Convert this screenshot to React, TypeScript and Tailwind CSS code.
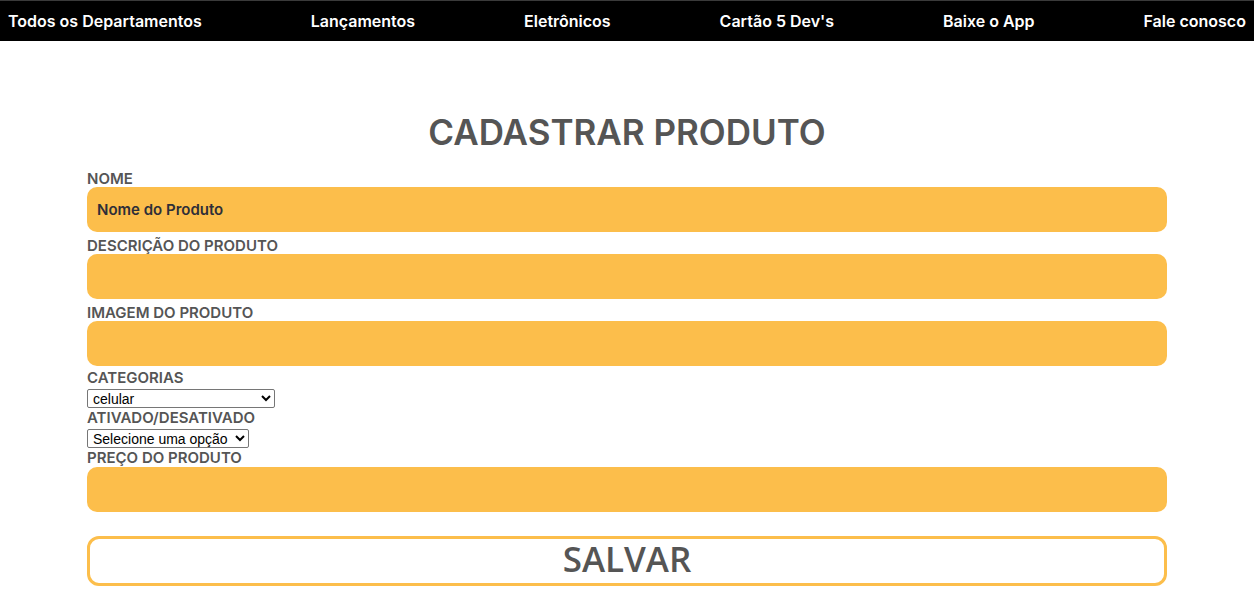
import React from "react";

const labelClass = "block text-[15px] leading-[17px] font-semibold text-[#555555]";
const inputClass =
  "block w-full h-[45px] rounded-[10px] bg-[#fcbe4b] px-[10px] text-[15px] font-semibold text-[#2e2e38] placeholder:text-[#2e2e38] outline-none";
const selectClass =
  "block mt-[3px] h-[19px] pl-[1px] border border-[#767676] rounded-[2px] bg-white text-[14px] leading-none text-black";

export default function App() {
  const links = ["Todos os Departamentos", "Lançamentos", "Eletrônicos", "Cartão 5 Dev's", "Baixe o App", "Fale conosco"];

  return (
    <div className="min-h-[598px] bg-white" style={{ fontFamily: "Inter, 'Noto Sans', sans-serif" }}>
      {/* Top nav */}
      <nav className="border-t border-[#3a3a3a] bg-black h-[41px] px-[8px] flex items-center justify-between">
        {links.map((l) => (
          <a key={l} href="#" className="text-white text-[16px] font-semibold leading-none">
            {l}
          </a>
        ))}
      </nav>

      <main className="px-[87px]">
        <h1 className="text-center text-[35px] leading-[42px] font-semibold text-[#555555] mt-[70px] mb-[17px]">
          CADASTRAR PRODUTO
        </h1>

        <form onSubmit={(e) => e.preventDefault()}>
          <label className={labelClass}>NOME</label>
          <input className={inputClass} placeholder="Nome do Produto" />

          <label className={labelClass + " mt-[5px]"}>DESCRIÇÃO DO PRODUTO</label>
          <input className={inputClass} />

          <label className={labelClass + " mt-[5px]"}>IMAGEM DO PRODUTO</label>
          <input className={inputClass} />

          <label className={labelClass + " mt-[3px]"}>CATEGORIAS</label>
          <select className={selectClass + " w-[188px]"} style={{ fontFamily: "'Liberation Sans', Arial, sans-serif" }}>
            <option>celular</option>
          </select>

          <label className={labelClass + " mt-[1px]"}>ATIVADO/DESATIVADO</label>
          <select className={selectClass + " w-[162px]"} style={{ fontFamily: "'Liberation Sans', Arial, sans-serif" }}>
            <option>Selecione uma opção</option>
          </select>

          <label className={labelClass + " mt-[1px]"}>PREÇO DO PRODUTO</label>
          <input className={inputClass + " mt-[1px]"} />

          <button
            type="submit"
            className="block w-full mt-[24px] h-[50px] pb-[5px] rounded-[12px] border-[3px] border-[#fcbe4b] bg-white text-[35px] leading-none font-semibold text-[#555555]"
            style={{ fontFamily: "'Open Sans', sans-serif" }}
          >
            SALVAR
          </button>
        </form>
      </main>
    </div>
  );
}
